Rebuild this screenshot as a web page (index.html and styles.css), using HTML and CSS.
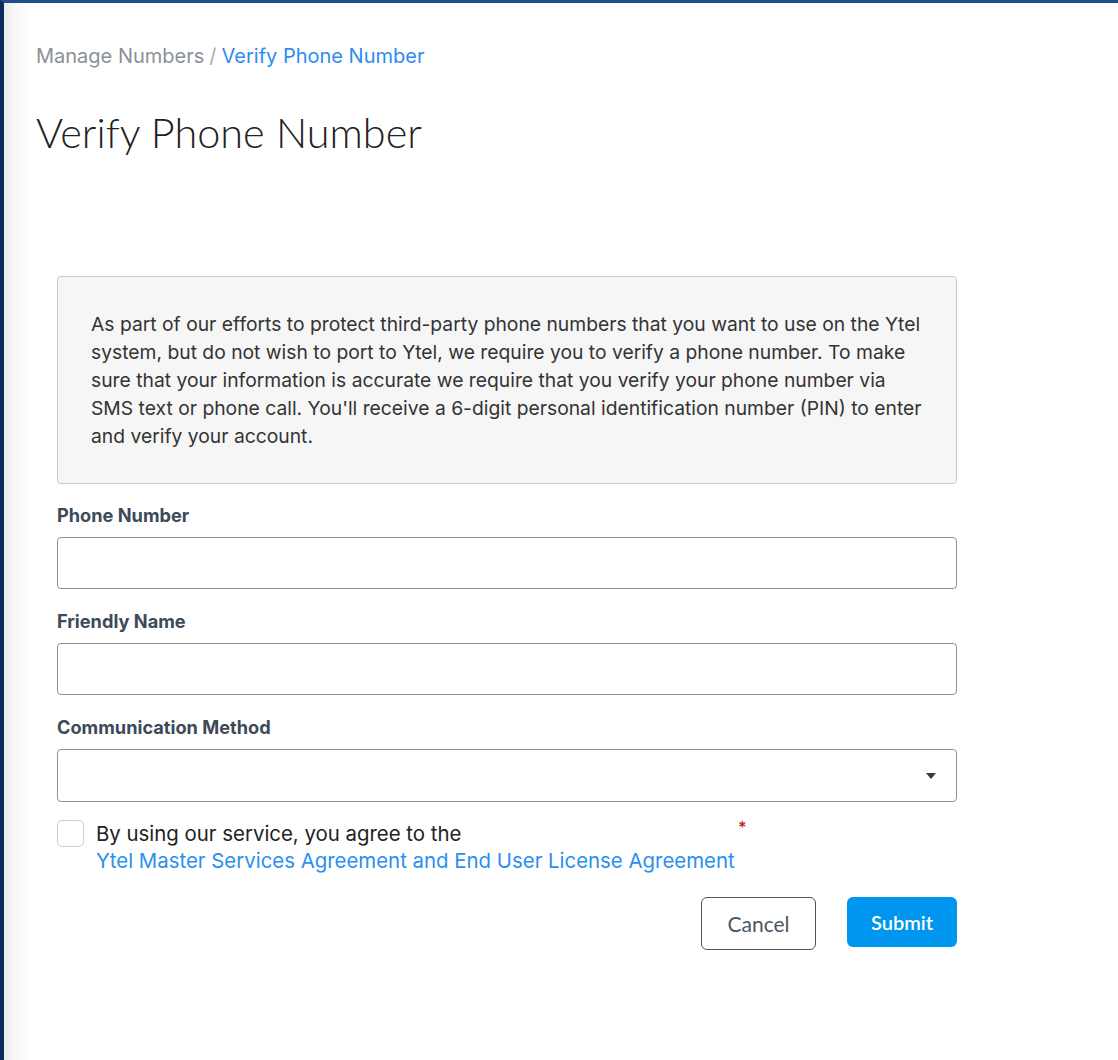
FILE: index.html
```html
<!DOCTYPE html>
<html lang="en">
<head>
<meta charset="utf-8">
<title>Verify Phone Number</title>
<link rel="stylesheet" href="styles.css">
</head>
<body>
<div class="frame">
  <main class="main">
    <nav class="breadcrumb">
      <span class="crumb">Manage Numbers</span>
      <span class="sep">/</span>
      <span class="crumb-active">Verify Phone Number</span>
    </nav>
    <h1 class="title">Verify Phone Number</h1>

    <section class="form-wrap">
      <div class="info-box">
        <p>As part of our efforts to protect third-party phone numbers that you want to use on the Ytel system, but do not wish to port to Ytel, we require you to verify a phone number. To make sure that your information is accurate we require that you verify your phone number via SMS text or phone call. You'll receive a 6-digit personal identification number (PIN) to enter and verify your account.</p>
      </div>

      <div class="field field-first">
        <label class="field-label">Phone Number</label>
        <input class="input" type="text">
      </div>
      <div class="field">
        <label class="field-label">Friendly Name</label>
        <input class="input" type="text">
      </div>
      <div class="field">
        <label class="field-label">Communication Method</label>
        <div class="select">
          <svg class="caret" width="10" height="6" viewBox="0 0 10 6"><path d="M0 0h10L5 6z" fill="#3a3a3a"/></svg>
        </div>
      </div>

      <div class="agree">
        <span class="checkbox"></span>
        <div class="agree-text">
          <span>By using our service, you agree to the</span>
          <a class="agree-link">Ytel Master Services Agreement and End User License Agreement</a>
          <span class="req">*</span>
        </div>
      </div>

      <div class="actions">
        <button class="btn btn-cancel">Cancel</button>
        <button class="btn btn-submit">Submit</button>
      </div>
    </section>
  </main>
</div>
</body>
</html>
```

FILE: styles.css
```css
* { box-sizing: border-box; }
html, body { margin: 0; padding: 0; }
body {
  background: #ffffff;
  font-family: "Inter", "Noto Sans", sans-serif;
  color: #333;
}
.frame {
  min-height: 1060px;
  border-top: 3px solid #1f4e8d;
  border-left: 4px solid #0b2d5e;
  background: linear-gradient(to right, #ececec 0px, #f7f7f7 10px, #ffffff 28px);
}
.main {
  padding: 41px 0 0 32px;
}
.breadcrumb {
  font-size: 20px;
  line-height: 24px;
  display: flex;
  gap: 5px;
}
.crumb { color: #8a9099; }
.sep { color: #a9adb3; }
.crumb-active { color: #2d8cf0; }
.title {
  margin: 39px 0 0 0;
  font-family: "Lato", sans-serif;
  font-weight: 300;
  font-size: 41.4px;
  line-height: 50px;
  color: #222;
}
.form-wrap {
  width: 900px;
  margin: 119px 0 0 21px;
}
.info-box {
  background: #f6f6f6;
  border: 1px solid #c8c8c8;
  border-radius: 4px;
  padding: 33px 33px 33px 33px;
}
.info-box p {
  margin: 0;
  font-size: 19.3px;
  line-height: 28px;
  color: #333;
}
.field {
  margin-top: 21px;
}
.field-first {
  margin-top: 20px;
}
.field-label {
  display: block;
  font-weight: 700;
  font-size: 18.2px;
  line-height: 22px;
  color: #3c4a59;
  margin-bottom: 11px;
}
.input, .select {
  display: block;
  width: 100%;
  height: 52px;
  border: 1px solid #8a939d;
  border-radius: 4px;
  background: #fff;
  font: inherit;
}
.select {
  height: 53px;
  display: flex;
  align-items: center;
  justify-content: flex-end;
  padding-right: 20px;
}
.agree {
  margin-top: 18px;
  display: flex;
  gap: 12px;
  align-items: flex-start;
}
.checkbox {
  width: 27px;
  height: 27px;
  border: 1px solid #cfcfcf;
  border-radius: 5px;
  flex: none;
}
.agree-text {
  position: relative;
  width: 650px;
  font-size: 20.4px;
  line-height: 27px;
  color: #222;
  display: flex;
  flex-direction: column;
}
.agree-link {
  color: #2a8ff0;
}
.req {
  position: absolute;
  left: 642px;
  top: -6px;
  color: #c0282b;
  font-size: 16px;
  font-weight: 600;
}
.actions {
  margin-top: 23px;
  display: flex;
  justify-content: flex-end;
  align-items: flex-start;
  gap: 31px;
}
.btn {
  font-family: "Lato", sans-serif;
  font-size: 21px;
  border-radius: 6px;
  cursor: pointer;
}
.btn-cancel {
  width: 115px;
  height: 53px;
  background: #fff;
  border: 1.5px solid #4b5663;
  color: #4b5663;
}
.btn-submit {
  width: 110px;
  height: 50px;
  background: #0096f0;
  border: none;
  color: #fff;
  font-weight: 600;
  font-size: 20px;
}
```
